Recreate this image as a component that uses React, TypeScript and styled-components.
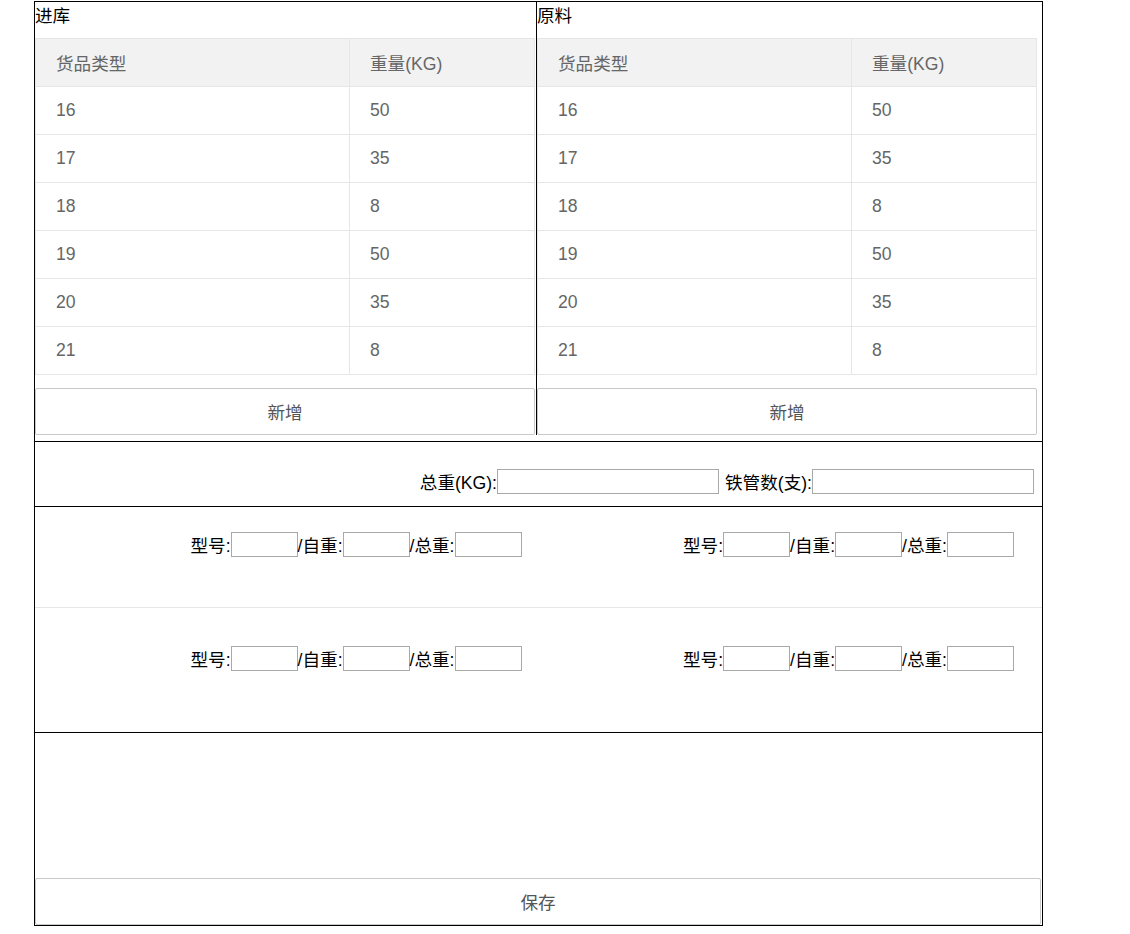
import styled, { createGlobalStyle } from 'styled-components';

const GlobalStyle = createGlobalStyle`
  body {
    margin: 0;
    background: #ffffff;
    font-family: "Liberation Sans", "Noto Sans CJK SC", sans-serif;
    font-size: 17.6px;
    color: #000;
  }
`;

const Frame = styled.div`
  width: 1007px;
  margin: 1px 0 0 34px;
  border: 1px solid #000;
`;

const TopRow = styled.div`
  display: flex;
`;

const Panel = styled.div<{ $divider?: boolean }>`
  width: 501px;
  border-right: ${(p) => (p.$divider ? '1px solid #000' : 'none')};
`;

const PanelTitle = styled.div`
  height: 28px;
  line-height: 28px;
  margin-bottom: 8px;
`;

const Table = styled.table`
  width: 500px;
  border-collapse: collapse;
  border: 1px solid #e6e6e6;
  color: #666;

  th,
  td {
    height: 48px;
    padding: 0 0 0 20px;
    text-align: left;
    font-weight: 400;
    border: 1px solid #e6e6e6;
    box-sizing: border-box;
  }

  th:first-child,
  td:first-child {
    width: 314px;
  }

  thead tr {
    background: #f2f2f2;
  }
`;

const GrayButton = styled.button<{ $full?: boolean }>`
  display: block;
  width: ${(p) => (p.$full ? '1006px' : '500px')};
  height: 47px;
  margin: ${(p) => (p.$full ? '0' : '13px 0 0 0')};
  border: 1px solid #c9c9c9;
  border-radius: 2px;
  background: #fff;
  color: #555;
  font-family: inherit;
  font-size: 17.6px;
  cursor: pointer;
`;

const Totals = styled.div`
  margin-top: 6px;
  border-top: 1px solid #000;
  height: 65px;
  padding: 27px 8px 0 0;
  box-sizing: border-box;
  display: flex;
  justify-content: flex-end;
  align-items: flex-start;
`;

const Field = styled.label<{ $gap?: number }>`
  display: flex;
  align-items: center;
  height: 25px;
  margin-left: ${(p) => p.$gap ?? 0}px;
  white-space: nowrap;
`;

const Box = styled.input<{ $w: number }>`
  width: ${(p) => p.$w}px;
  height: 25px;
  box-sizing: border-box;
  border: 1px solid #a9a9a9;
  padding: 0 2px;
  margin: 0;
  font-family: inherit;
`;

const Models = styled.div`
  border-top: 1px solid #000;
`;

const ModelRow = styled.div<{ $h: number; $top: number; $line?: boolean }>`
  display: grid;
  grid-template-columns: 1fr 1fr;
  height: ${(p) => p.$h}px;
  padding-top: ${(p) => p.$top}px;
  box-sizing: border-box;
  border-bottom: ${(p) => (p.$line ? '1px solid #e6e6e6' : 'none')};
`;

const ModelCell = styled.div<{ $right: number }>`
  display: flex;
  justify-content: flex-end;
  align-items: flex-start;
  padding-right: ${(p) => p.$right}px;
`;

const Footer = styled.div`
  border-top: 1px solid #000;
  height: 192px;
  display: flex;
  flex-direction: column;
  justify-content: flex-end;
`;

const rows = [
  ['16', '50'],
  ['17', '35'],
  ['18', '8'],
  ['19', '50'],
  ['20', '35'],
  ['21', '8'],
];

const StockPanel = ({ title, divider }: { title: string; divider?: boolean }) => (
  <Panel $divider={divider}>
    <PanelTitle>{title}</PanelTitle>
    <Table>
      <thead>
        <tr>
          <th>货品类型</th>
          <th>重量(KG)</th>
        </tr>
      </thead>
      <tbody>
        {rows.map(([type, kg]) => (
          <tr key={type}>
            <td>{type}</td>
            <td>{kg}</td>
          </tr>
        ))}
      </tbody>
    </Table>
    <GrayButton>新增</GrayButton>
  </Panel>
);

const ModelGroup = ({ right }: { right: number }) => (
  <ModelCell $right={right}>
    <Field>
      型号:<Box $w={67} />
    </Field>
    <Field>
      /自重:<Box $w={67} />
    </Field>
    <Field>
      /总重:<Box $w={67} />
    </Field>
  </ModelCell>
);

const App = () => (
  <>
    <GlobalStyle />
    <Frame>
      <TopRow>
        <StockPanel title="进库" divider />
        <StockPanel title="原料" />
      </TopRow>

      <Totals>
        <Field>
          总重(KG):<Box $w={222} />
        </Field>
        <Field $gap={6}>
          铁管数(支):<Box $w={222} />
        </Field>
      </Totals>

      <Models>
        <ModelRow $h={101} $top={25} $line>
          <ModelGroup right={17} />
          <ModelGroup right={28} />
        </ModelRow>
        <ModelRow $h={124} $top={38}>
          <ModelGroup right={17} />
          <ModelGroup right={28} />
        </ModelRow>
      </Models>

      <Footer>
        <GrayButton $full>保存</GrayButton>
      </Footer>
    </Frame>
  </>
);

export default App;
